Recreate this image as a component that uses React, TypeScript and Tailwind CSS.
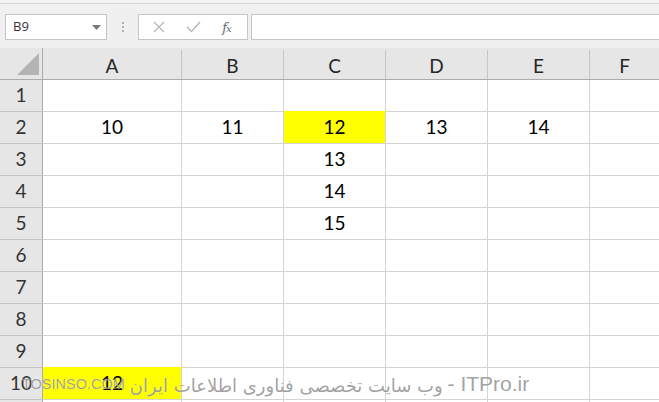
import React from "react";

const cols = ["A", "B", "C", "D", "E", "F"];
const colW = ["w-[139px]", "w-[102px]", "w-[102px]", "w-[102px]", "w-[102px]", "flex-1"];

type Cell = { v?: string; y?: boolean };
const data: Record<number, Record<string, Cell>> = {
  2: { A: { v: "10" }, B: { v: "11" }, C: { v: "12", y: true }, D: { v: "13" }, E: { v: "14" } },
  3: { C: { v: "13" } },
  4: { C: { v: "14" } },
  5: { C: { v: "15" } },
  10: { A: { v: "12", y: true } },
};

export default function App() {
  const rows = [1, 2, 3, 4, 5, 6, 7, 8, 9, 10, 11];
  return (
    <div className="relative w-[659px] h-[402px] overflow-hidden bg-[#f0f0f0] font-['Lato',sans-serif] select-none">
      {/* ribbon remnant */}
      <div className="h-[4px] border-b border-[#d6d6d6] bg-[#f3f3f3]" />
      {/* formula bar */}
      <div className="h-[44px] flex items-start pt-[10px] pl-[5px]">
        <div className="w-[102px] h-[26px] bg-white border border-[#c6c6c6] flex items-center pl-[7px] pr-[5px] font-['Open_Sans',sans-serif] text-[13px] text-[#333]">
          <span className="flex-1">B9</span>
          <svg width="9" height="5" viewBox="0 0 9 5"><path d="M0 0h9L4.5 5z" fill="#777" /></svg>
        </div>
        <div className="w-[31px] h-[26px] flex flex-col items-center justify-center gap-[2px]">
          <span className="w-[2px] h-[2px] bg-[#b0b0b0]" />
          <span className="w-[2px] h-[2px] bg-[#b0b0b0]" />
          <span className="w-[2px] h-[2px] bg-[#b0b0b0]" />
        </div>
        <div className="w-[110px] h-[26px] bg-white border border-[#c6c6c6] flex items-center">
          <div className="w-[37px] flex justify-center pl-[2px]">
            <svg width="12" height="12" viewBox="0 0 12 12"><path d="M1 1l10 10M11 1L1 11" stroke="#b9b9b9" strokeWidth="1.3" /></svg>
          </div>
          <div className="w-[35px] flex justify-center">
            <svg width="15" height="12" viewBox="0 0 15 12"><path d="M1 6l4.5 4.5L14 1" stroke="#b9b9b9" strokeWidth="1.5" fill="none" /></svg>
          </div>
          <div className="flex-1 flex justify-center pr-[4px] font-['DejaVu_Serif',serif] italic text-[13px] text-[#666] leading-none">
            f<span className="text-[10px] -ml-[1px] mt-[3px]">x</span>
          </div>
        </div>
        <div className="ml-[3px] flex-1 h-[26px] bg-white border border-[#c6c6c6] border-r-0" />
      </div>
      {/* column header */}
      <div className="flex h-[32px] bg-[#e6e6e6] border-b border-[#ababab]">
        <div className="w-[43px] border-r border-[#ababab] flex items-end justify-end pb-[4px] pr-[3px]">
          <svg width="22" height="22" viewBox="0 0 22 22"><path d="M22 0V22H0z" fill="#b4b4b4" /></svg>
        </div>
        {cols.map((c, i) => (
          <div key={c} className={`${colW[i]} pt-[2px] flex`}>
            <div className={`flex-1 flex items-center justify-center pt-[4px] text-[19px] text-[#262626] ${i < 5 ? "border-r border-[#c6c6c6]" : ""}`}>
              {c}
            </div>
          </div>
        ))}
      </div>
      {/* rows */}
      {rows.map((r) => (
        <div key={r} className="flex h-[32px]">
          <div className="w-[43px] bg-[#e6e6e6] border-r border-b border-r-[#ababab] border-b-[#c6c6c6] flex items-center justify-center text-[19px] text-[#333]">
            {r < 11 ? r : ""}
          </div>
          {cols.map((c, i) => {
            const cell = data[r]?.[c];
            return (
              <div
                key={c}
                className={`${colW[i]} border-b border-[#d4d4d4] ${i < 5 ? "border-r" : ""} flex items-center justify-center text-[19px] text-black ${
                  cell?.y ? "bg-[#ffff00] relative shadow-[0_-1px_0_#ffff00]" : "bg-white"
                }`}
              >
                {cell?.v}
              </div>
            );
          })}
        </div>
      ))}
      {/* watermark overlay */}
      <div className="absolute left-[22px] top-[368px] h-[32px] flex items-center whitespace-nowrap text-[rgba(115,115,115,0.68)] [text-shadow:0_0_1px_rgba(255,255,255,0.8)] pointer-events-none" dir="ltr">
        <span className="font-['Liberation_Sans',sans-serif] text-[14.5px] mt-[2px]">TOSINSO.COM</span>
        <span className="ml-[5px] font-['DejaVu_Sans',sans-serif] text-[18px] mt-[2px]" dir="rtl">وب سایت تخصصی فناوری اطلاعات ایران</span>
        <span className="ml-[5px] font-['Liberation_Sans',sans-serif] text-[21px]">- ITPro.ir</span>
      </div>
    </div>
  );
}
